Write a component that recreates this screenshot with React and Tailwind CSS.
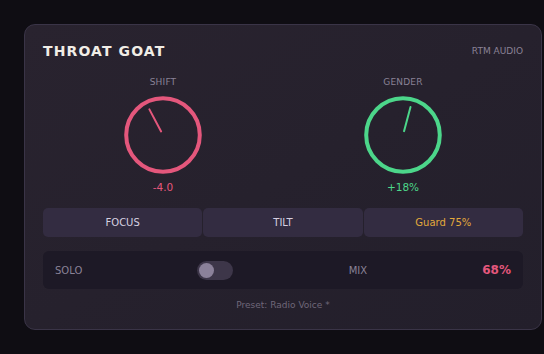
import React from 'react';

const font = { fontFamily: '"DejaVu Sans", Verdana, sans-serif' };

function Knob({ label, value, color, angle }) {
  return (
    <div className="flex flex-col items-center">
      <span className="text-[9px] leading-[12px] text-[#8a8296] tracking-[0.02em]">{label}</span>
      <svg className="mt-[8px] h-[78px] w-[78px]" viewBox="0 0 78 78">
        <circle cx="39" cy="39" r="36.8" fill="none" stroke={color} strokeWidth="4" />
        <line
          x1="39" y1="35" x2="39" y2="10"
          stroke={color} strokeWidth="2" strokeLinecap="round"
          transform={`rotate(${angle} 39 39)`}
        />
      </svg>
      <span className="mt-[6px] text-[10.5px] leading-[14px]" style={{ color }}>{value}</span>
    </div>
  );
}

export default function App() {
  return (
    <div className="min-h-[354px] w-[544px] bg-[#0f0d13] pt-[24px] pl-[24px]" style={font}>
      <div className="w-[518px] rounded-[11px] border border-[#3a3447] bg-gradient-to-br from-[#29232f] to-[#231f2b] p-[18px]">
        {/* header */}
        <div className="flex h-[16px] items-center justify-between">
          <h1 className="text-[14px] font-bold leading-[16px] tracking-[0.08em] text-[#f1ede6]">THROAT GOAT</h1>
          <span className="text-[9px] leading-[12px] text-[#8a8296]">RTM AUDIO</span>
        </div>

        {/* knobs */}
        <div className="mt-[17px] grid grid-cols-2">
          <Knob label="SHIFT" value="-4.0" color="#e4577c" angle={-28} />
          <Knob label="GENDER" value="+18%" color="#4cd68a" angle={15} />
        </div>

        {/* mode buttons */}
        <div className="mt-[14px] grid grid-cols-3 gap-px text-[10px]">
          <button className="h-[29px] rounded-[5px] bg-[#332c41] text-[#d6d0e0]">FOCUS</button>
          <button className="h-[29px] rounded-[5px] bg-[#332c41] text-[#d6d0e0]">TILT</button>
          <button className="h-[29px] rounded-[5px] bg-[#332c41] text-[#e2a93b]">Guard 75%</button>
        </div>

        {/* solo / mix row */}
        <div className="mt-[14px] flex h-[38px] items-center justify-between rounded-[6px] bg-[#1d1926] px-[12px]">
          <span className="text-[10px] text-[#8a8296]">SOLO</span>
          <div className="flex h-[19px] w-[36px] items-center rounded-full bg-[#3d3649] pl-[2px]">
            <div className="h-[15px] w-[15px] rounded-full bg-[#8b819a]" />
          </div>
          <span className="text-[10px] text-[#8a8296]">MIX</span>
          <span className="text-[12px] font-bold text-[#e4577c]">68%</span>
        </div>

        <p className="mt-[10px] text-center text-[9px] leading-[12px] text-[#6f6779]">Preset: Radio Voice *</p>
      </div>
    </div>
  );
}
